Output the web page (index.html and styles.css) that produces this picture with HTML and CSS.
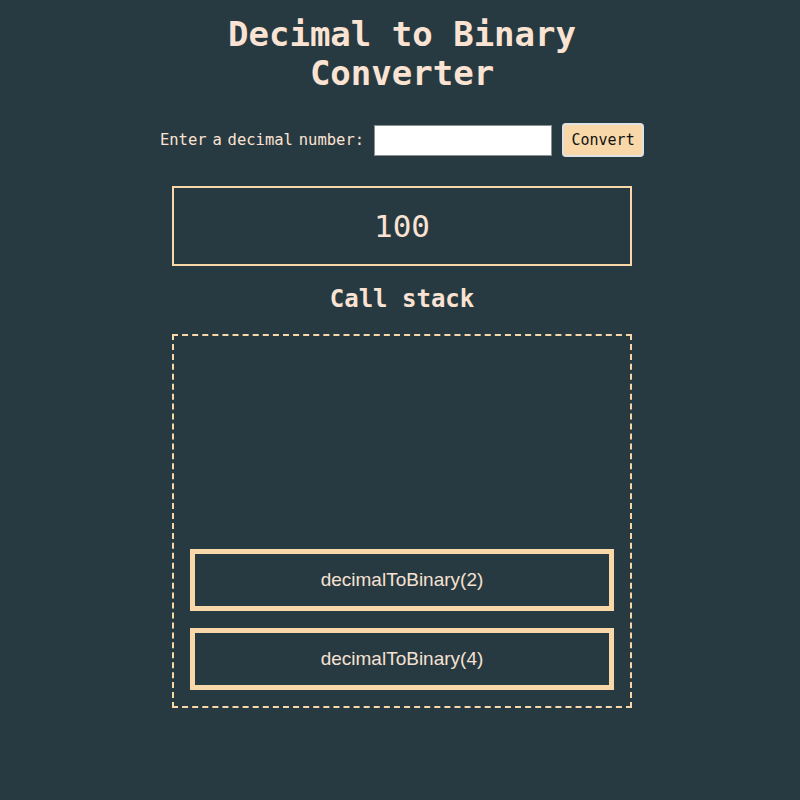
FILE: index.html
```html
<!DOCTYPE html>
<html lang="en">
<head>
<meta charset="utf-8">
<title>Decimal to Binary Converter</title>
<link rel="stylesheet" href="styles.css">
</head>
<body>
<main class="page">
  <h1 class="title">Decimal to Binary Converter</h1>
  <div class="form-row">
    <label class="label" for="number-input">Enter a decimal number:</label>
    <input class="number-input" id="number-input" type="number">
    <button class="convert-btn" type="button">Convert</button>
  </div>
  <div class="result">100</div>
  <h2 class="stack-title">Call stack</h2>
  <div class="animation">
    <div class="frame">decimalToBinary(2)</div>
    <div class="frame">decimalToBinary(4)</div>
  </div>
</main>
</body>
</html>
```

FILE: styles.css
```css
html, body {
  margin: 0;
  padding: 0;
  background: #283a41;
}

body {
  color: #fbe3d3;
  font-family: "DejaVu Sans Mono", monospace;
  padding-left: 4px;
}

.page {
  width: 460px;
  margin: 0 auto;
  display: flex;
  flex-direction: column;
  align-items: center;
}

.title {
  margin: 15px 0 0;
  font-size: 34px;
  line-height: 39px;
  font-weight: bold;
  text-align: center;
}

.form-row {
  margin-top: 30px;
  display: flex;
  align-items: center;
  justify-content: center;
  width: 800px;
  box-sizing: border-box;
}

.label {
  font-size: 15.5px;
  word-spacing: -3.5px;
  margin-right: 10px;
}

.number-input {
  width: 178px;
  height: 31px;
  box-sizing: border-box;
  border: 1px solid #8a8f92;
  background: #ffffff;
  margin: 0 10px 0 0;
  padding: 0 4px;
}

.convert-btn {
  width: 82px;
  height: 34px;
  box-sizing: border-box;
  background: #f8d8a9;
  border: 2px solid #dfe2e4;
  border-radius: 4px;
  font-family: "DejaVu Sans Mono", monospace;
  font-size: 15px;
  color: #111;
  padding: 0;
}

.result {
  margin-top: 29px;
  width: 460px;
  height: 80px;
  box-sizing: border-box;
  border: 2px solid #f8d8a9;
  display: flex;
  align-items: center;
  justify-content: center;
  font-size: 31px;
}

.stack-title {
  margin: 18px 0 0;
  font-size: 24px;
  line-height: 30px;
  font-weight: bold;
}

.animation {
  margin-top: 20px;
  width: 460px;
  height: 374px;
  box-sizing: border-box;
  border: 2px dashed #f8d8a9;
  padding: 16px;
  display: flex;
  flex-direction: column;
  justify-content: flex-end;
  gap: 17px;
}

.frame {
  height: 62px;
  box-sizing: border-box;
  border: 5px solid #f8d8a9;
  display: flex;
  align-items: center;
  justify-content: center;
  font-family: "Liberation Sans", Arial, sans-serif;
  font-size: 19px;
  color: #f5e1d3;
}
```
